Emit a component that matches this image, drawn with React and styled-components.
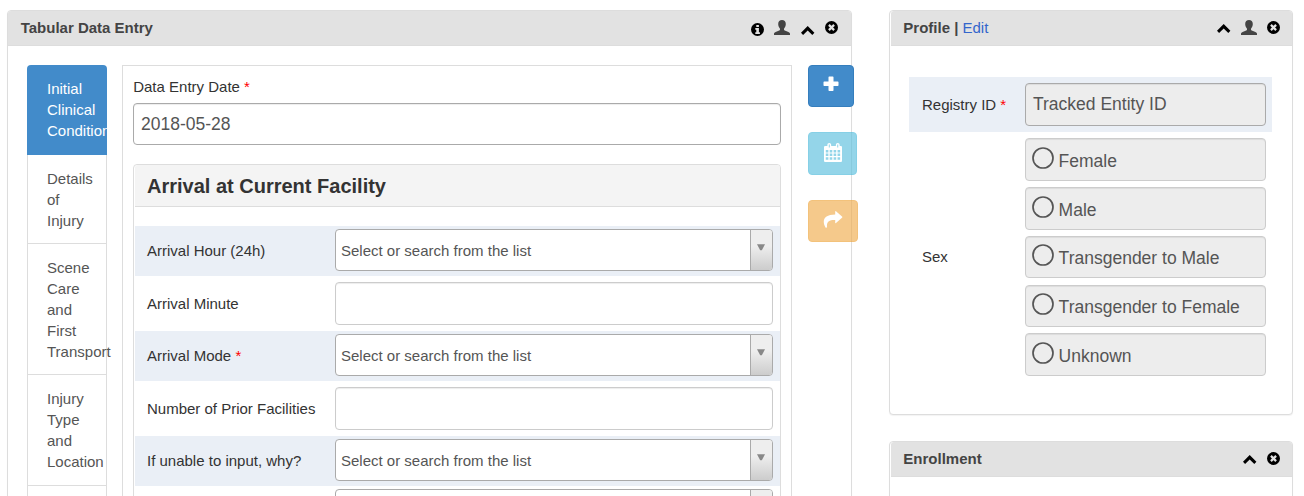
import React from "react";
import styled, { createGlobalStyle } from "styled-components";

const GlobalStyle = createGlobalStyle`
  *, *::before, *::after { box-sizing: border-box; }
  body {
    margin: 0;
    overflow: hidden;
    background: #fff;
    color: #333;
    font: 15px/21px "Liberation Sans", Arial, sans-serif;
  }
`;

const Page = styled.main`
  display: flex;
  align-items: flex-start;
  gap: 37px;
  height: 496px;
  padding: 10px 0 0 7px;
  overflow: hidden;
`;

const Column = styled.div`
  display: flex;
  flex-direction: column;
  flex: none;
  gap: 26px;
  width: ${(p) => p.$width}px;
`;

const Panel = styled.section`
  height: ${(p) => p.$height}px;
  border: 1px solid #ddd;
  border-radius: 4px;
  background: #fff;
  box-shadow: 0 1px 1px rgba(0, 0, 0, 0.05);
`;

const PanelHeader = styled.header`
  display: flex;
  justify-content: space-between;
  height: 35px;
  margin-left: ${(p) => (p.$inset ? 1 : 0)}px;
  padding: ${(p) => (p.$inset ? "0 12.5px 0 12.3px" : "0 13px 0 12.7px")};
  border-bottom: 1px solid #ddd;
  border-radius: 3px 3px 0 0;
  background: #e2e2e2;
  color: #444;
`;

const PanelTitle = styled.h2`
  margin: 6px 0 0;
  font-size: 15px;
  line-height: 21px;
  font-weight: bold;
`;

const EditLink = styled.a`
  color: #36c;
  font-weight: normal;
  text-decoration: none;
`;

const Tools = styled.div`
  display: flex;
  align-items: flex-start;
  gap: ${(p) => p.$gap}px;
`;

const ToolIcon = styled.svg`
  display: block;
  margin-top: ${(p) => p.$top}px;
  color: ${(p) => p.$color || "#000"};
  fill: currentColor;
`;

const InfoIcon = ({ top }) => (
  <ToolIcon $top={top} width="13" height="13" viewBox="0 0 13 13">
    <circle cx="6.5" cy="6.5" r="6.5" />
    <path fill="#e2e2e2" d="M5.3 2h2.6v2H5.3zM4.3 5h3.600v4.300h1v1.700H4.300V9.300h1V6.700h-1z" />
  </ToolIcon>
);

const UserIcon = ({ top }) => (
  <ToolIcon $top={top} $color="#444" width="16" height="15" viewBox="0 0 16 15">
    <path d="M8 0C5.7 0 4.2 1.5 4.2 3.9c0 1.7.7 3.4 1.7 4.5.3.9.1 1.6-.7 2L1.600 12C.6 12.500 0 13 0 14v1h16v-1c0-1-.6-1.500-1.600-2l-3.600-1.600c-.8-.4-1-1.100-.7-2 1-1.100 1.700-2.800 1.700-4.500C11.800 1.500 10.300 0 8 0z" />
  </ToolIcon>
);

const ChevronIcon = ({ top }) => (
  <ToolIcon $top={top} width="14" height="9" viewBox="0 0 14 9">
    <path d="M6.700 0 0 6.700 2.100 8.900 6.700 4.500l4.600 4.400 2.100-2.200z" />
  </ToolIcon>
);

const CloseIcon = ({ top }) => (
  <ToolIcon $top={top} width="13" height="13" viewBox="0 0 13 13">
    <circle cx="6.5" cy="6.5" r="6.5" />
    <path stroke="#e2e2e2" strokeWidth="2.2" d="m3.900 3.900 5.200 5.200m0-5.200-5.200 5.200" />
  </ToolIcon>
);

const EntryBody = styled.div`
  display: flex;
  align-items: flex-start;
  padding: 19px 0 0 19px;
`;

const StageTabs = styled.nav`
  flex: none;
  width: 80px;
  margin-right: 15px;
`;

const StageTab = styled.div`
  min-height: 40px;
  padding: 13px 20px ${(p) => (p.$roomy ? 13 : 12)}px 19px;
  border: 1px solid #ddd;
  border-top: 0;
  color: #555;
  ${(p) =>
    p.$active &&
    `border: 0; padding: 13px 20px 14px; border-radius: 4px 4px 0 0; background: #428bca; color: #fff;`}
`;

const FormBox = styled.div`
  flex: none;
  width: 670px;
  height: 520px;
  margin-right: 16px;
  padding: 10px 10px 0;
  border: 1px solid #ddd;
`;

const FieldLabel = styled.label`
  display: block;
  padding-left: 0.2px;
`;

const Required = styled.span`
  color: #f00;
`;

const TextField = styled.div`
  width: 100%;
  height: ${(p) => p.$height || 43}px;
  padding: 0 7px;
  border: 1px solid ${(p) => (p.$strong ? "#aaa" : "#ccc")};
  border-radius: 4px;
  background: ${(p) => (p.$disabled ? "#ededed" : "#fff")};
  box-shadow: inset 0 1px 1px rgba(0, 0, 0, 0.075);
  color: #555;
  font-size: 17.5px;
  line-height: 40px;
`;

const DateField = styled(TextField)`
  margin: 6px 0 19px;
  border-color: #aaa;
`;

const FormSection = styled.section`
  padding-left: 1px;
  border: 1px solid #ddd;
  border-radius: 4px;
`;

const SectionTitle = styled.h3`
  height: 42px;
  margin: 0 0 19px;
  padding-left: 12px;
  border-bottom: 1px solid #ddd;
  border-radius: 3px 3px 0 0;
  background: #f4f4f4;
  font-size: 20px;
  line-height: 42px;
  font-weight: bold;
`;

const FormRow = styled.div`
  display: grid;
  grid-template-columns: 188px 438px;
  align-items: center;
  height: ${(p) => (p.$select ? 50 : 55)}px;
  padding: ${(p) => (p.$select ? "3px 0 5px 12px" : "6px 0 6px 12px")};
  background: ${(p) => (p.$select ? "#eaeff6" : "#fff")};
`;

const RowLabel = styled.span`
  display: block;
`;

const SelectBox = styled.div`
  display: flex;
  justify-content: space-between;
  height: 42px;
  border: 1px solid #aaa;
  border-radius: 4px;
  background: #fff;
  color: #555;
  line-height: 42px;
  padding-left: 5px;
  overflow: hidden;
`;

const SelectArrow = styled.span`
  display: flex;
  width: 22px;
  margin-left: auto;
  padding: 14px 0 0 6px;
  border-left: 1px solid #aaa;
  background: linear-gradient(to top, #ccc 0%, #eee 60%);
`;

const PeekRow = styled(FormRow)`
  background: #fff;
`;

const Actions = styled.div`
  display: flex;
  flex-direction: column;
  align-items: flex-start;
  gap: 25px;
`;

const ActionButton = styled.button`
  display: flex;
  justify-content: center;
  width: ${(p) => p.$width}px;
  height: ${(p) => p.$height}px;
  padding: 10px 0 0;
  border: 1px solid ${(p) => p.$border};
  border-radius: 4px;
  background: ${(p) => p.$bg};
  color: #fff;
  opacity: ${(p) => (p.disabled ? 0.65 : 1)};
`;

const ProfileBody = styled.div`
  padding: 31px 20px 0 19px;
`;

const ProfileRow = styled.div`
  display: grid;
  grid-template-columns: 103px 241px;
  align-items: center;
  padding: 6px 0 6px 13px;
  background: ${(p) => (p.$tinted ? "#eaeff6" : "#fff")};
`;

const OptionList = styled.div`
  display: flex;
  flex-direction: column;
  gap: 6.15px;
  padding-top: 0.3px;
`;

const Option = styled(TextField)`
  display: flex;
  align-items: flex-start;
  gap: 4.6px;
  padding: 0.6px 0 0 6px;
  line-height: 42px;
`;

const Radio = styled.svg`
  flex: none;
  margin-top: 7px;
  fill: none;
  stroke: #555;
  stroke-width: 1.7px;
`;

const stages = [
  { name: "Initial Clinical Condition", active: true },
  { name: "Details of Injury" },
  { name: "Scene Care and First Transport" },
  { name: "Injury Type and Location", roomy: true },
  { name: "" },
];

const fields = [
  { label: "Arrival Hour (24h)", select: true },
  { label: "Arrival Minute" },
  { label: "Arrival Mode", select: true, required: true },
  { label: "Number of Prior Facilities" },
  { label: "If unable to input, why?", select: true },
];

const sexes = ["Female", "Male", "Transgender to Male", "Transgender to Female", "Unknown"];

const Select = ({ children }) => (
  <SelectBox>
    {children}
    <SelectArrow>
      <svg width="8" height="7" viewBox="0 0 8 7">
        <path fill="#888" d="M0 .3h8L4.800 6.300H3.200z" />
      </svg>
    </SelectArrow>
  </SelectBox>
);

export default function App() {
  return (
    <>
      <GlobalStyle />
      <Page>
        <Column $width={845}>
          <Panel $height={620}>
            <PanelHeader>
              <PanelTitle>Tabular Data Entry</PanelTitle>
              <Tools $gap={10.5}>
                <InfoIcon top={12} />
                <UserIcon top={9} />
                <ChevronIcon top={15} />
                <CloseIcon top={10} />
              </Tools>
            </PanelHeader>
            <EntryBody>
              <StageTabs>
                {stages.map((s) => (
                  <StageTab key={s.name} $active={s.active} $roomy={s.roomy}>
                    {s.name}
                  </StageTab>
                ))}
              </StageTabs>
              <FormBox>
                <FieldLabel>
                  Data Entry Date <Required>*</Required>
                </FieldLabel>
                <DateField $height={42}>2018-05-28</DateField>
                <FormSection>
                  <SectionTitle>Arrival at Current Facility</SectionTitle>
                  {fields.map((f) => (
                    <FormRow key={f.label} $select={f.select}>
                      <RowLabel>
                        {f.label} {f.required && <Required>*</Required>}
                      </RowLabel>
                      {f.select ? <Select>Select or search from the list</Select> : <TextField />}
                    </FormRow>
                  ))}
                  <PeekRow $select>
                    <RowLabel />
                    <Select />
                  </PeekRow>
                </FormSection>
              </FormBox>
              <Actions>
                <ActionButton $width={46} $height={42} $bg="#428bca" $border="#357ebd">
                  <svg width="16" height="16" viewBox="0 0 16 16">
                    <path
                      fill="#fff"
                      d="M6.200.500h3.600q.7 0 .7.700V5.500h4.300q.7 0 .7.700v3.100q0 .7-.7.700h-4.300v4.300q0 .7-.7.700H6.200q-.7 0-.7-.7V10H1.200q-.7 0-.7-.7V6.200q0-.7.700-.7h4.300V1.200q0-.7.700-.7z"
                    />
                  </svg>
                </ActionButton>
                <ActionButton $width={49} $height={43} $bg="#5bc0de" $border="#46b8da" disabled>
                  <svg width="18" height="19" viewBox="0 0 18 19">
                    <path
                      fill="#fff"
                      fillRule="evenodd"
                      d="M1 3H3V1.700a1.700 1.700 0 0 1 3.400 0V3h4.200V1.700a1.700 1.700 0 0 1 3.400 0V3h1.100q1 0 1 1v14q0 1-1 1H1q-1 0-1-1V4q0-1 1-1zM4.300 1.600v3h.9v-3zm7.500 0v3h.9v-3zM1.600 7v2.400h2.300V7zm3.500 0v2.400h2.300V7zm3.500 0v2.400h2.300V7zm3.500 0v2.400h2.300V7zM1.600 10.600V13h2.300v-2.400zm3.500 0V13h2.300v-2.400zm3.500 0V13h2.300v-2.400zm3.500 0V13h2.300v-2.400zM1.600 14.200v2.500h2.300v-2.500zm3.500 0v2.500h2.300v-2.500zm3.500 0v2.500h2.300v-2.500zm3.500 0v2.500h2.300v-2.500z"
                      transform="scale(1.12 1)"
                    />
                  </svg>
                </ActionButton>
                <ActionButton $width={50} $height={42} $bg="#f0ad4e" $border="#eea236" disabled>
                  <svg width="20" height="17" viewBox="0 0 20 17">
                    <path
                      fill="#fff"
                      d="M12.200.5q0-.8.8-.3l6 5.400q.7.600 0 1.200l-6 5.300q-.8.500-.8-.3V9C7 8.700 3.400 10 4 16q0 .8-.8.800-.5 0-.8-.5C-1.500 9 1.500 3.500 12.200 3.500z"
                    />
                  </svg>
                </ActionButton>
              </Actions>
            </EntryBody>
          </Panel>
        </Column>
        <Column $width={404}>
          <Panel $height={405}>
            <PanelHeader $inset>
              <PanelTitle>
                Profile | <EditLink>Edit</EditLink>
              </PanelTitle>
              <Tools $gap={10}>
                <ChevronIcon top={13} />
                <UserIcon top={9} />
                <CloseIcon top={10} />
              </Tools>
            </PanelHeader>
            <ProfileBody>
              <ProfileRow $tinted>
                <RowLabel>
                  Registry ID <Required>*</Required>
                </RowLabel>
                <TextField $disabled $strong>
                  Tracked Entity ID
                </TextField>
              </ProfileRow>
              <ProfileRow>
                <RowLabel>Sex</RowLabel>
                <OptionList>
                  {sexes.map((s) => (
                    <Option key={s} $disabled $height={42.6}>
                      <Radio width="22" height="22" viewBox="0 0 22 22">
                        <circle cx="11" cy="11" r="10" />
                      </Radio>
                      {s}
                    </Option>
                  ))}
                </OptionList>
              </ProfileRow>
            </ProfileBody>
          </Panel>
          <Panel $height={100}>
            <PanelHeader $inset>
              <PanelTitle>Enrollment</PanelTitle>
              <Tools $gap={10}>
                <ChevronIcon top={13} />
                <CloseIcon top={10} />
              </Tools>
            </PanelHeader>
          </Panel>
        </Column>
      </Page>
    </>
  );
}
